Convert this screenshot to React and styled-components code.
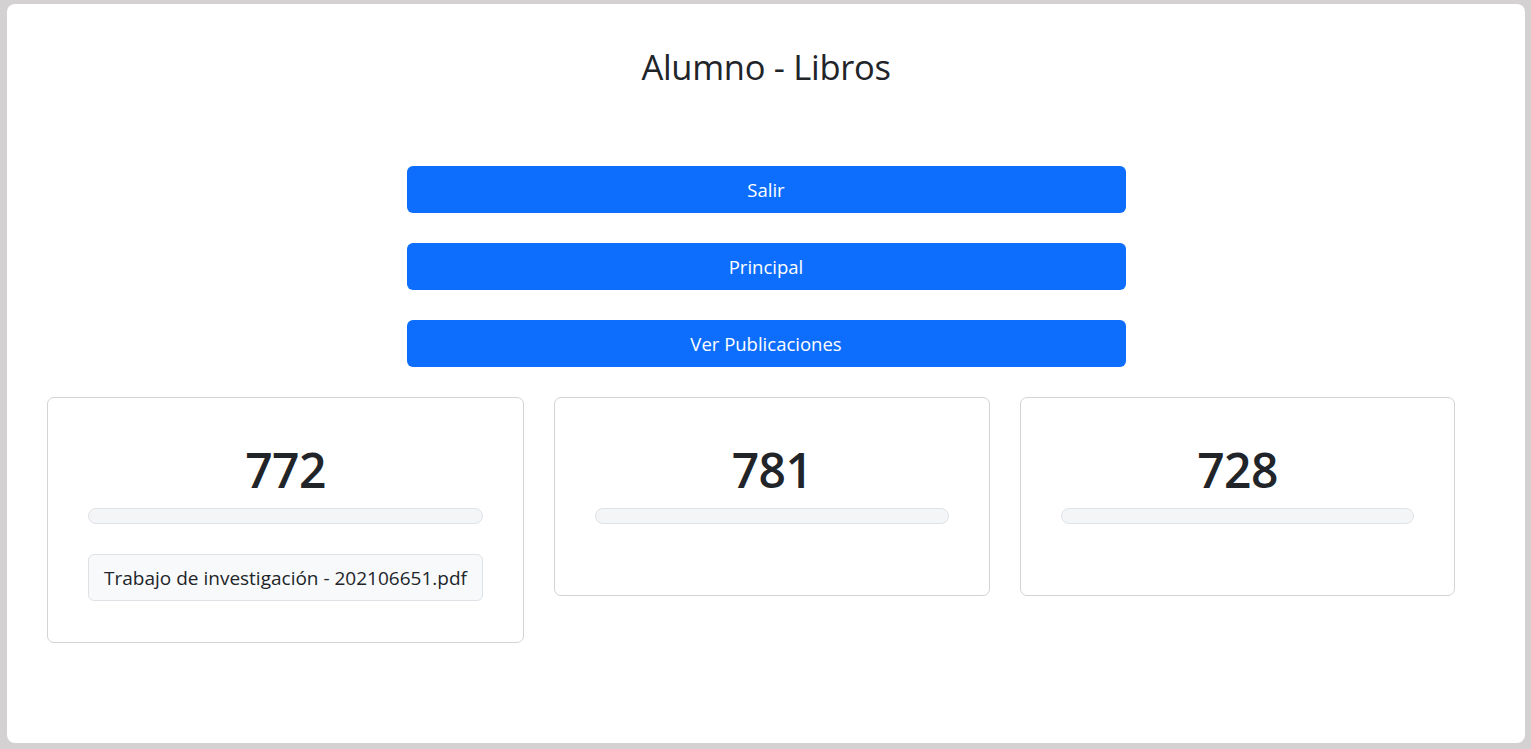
import React from 'react'
import styled, { createGlobalStyle } from 'styled-components'

const GlobalStyle = createGlobalStyle`
  html, body {
    margin: 0;
    padding: 0;
    height: 100%;
    background: #d3d1d1;
  }
  body {
    font-family: "Open Sans", "Noto Sans", "Liberation Sans", sans-serif;
    color: #212529;
  }
`;

const Frame = styled.div`
  box-sizing: border-box;
  height: 749px;
  padding: 4px 6px 6px 7px;
`;

const Page = styled.main`
  box-sizing: border-box;
  height: 100%;
  background: #ffffff;
  border-radius: 8px;
  padding-top: 36px;
  display: flex;
  flex-direction: column;
`;

const Title = styled.h2`
  margin: 0;
  text-align: center;
  font-size: 34.5px;
  font-weight: 400;
  line-height: 54px;
  letter-spacing: -0.3px;
`;

const ButtonStack = styled.div`
  margin-top: 72px;
  display: flex;
  flex-direction: column;
  align-items: center;
  gap: 30px;
`;

const NavButton = styled.button`
  width: 719px;
  height: 47px;
  border: none;
  border-radius: 6px;
  background: #0d6efd;
  color: #ffffff;
  font-family: inherit;
  font-size: 18.5px;
  cursor: pointer;
`;

const CardRow = styled.div`
  margin-top: 30px;
  padding-left: 40px;
  display: grid;
  grid-template-columns: 477px 436px 435px;
  column-gap: 30px;
  align-items: start;
`;

const Card = styled.section`
  box-sizing: border-box;
  border: 1px solid #d3d3d3;
  border-radius: 7px;
  padding: 40px 40px 41px;
  display: flex;
  flex-direction: column;
  align-items: stretch;
`;

const Count = styled.div`
  text-align: center;
  font-size: 48px;
  font-weight: 600;
  line-height: 58px;
  letter-spacing: -0.6px;
  padding-top: 3px;
  margin-bottom: 9px;
`;

const Progress = styled.div`
  box-sizing: border-box;
  height: 16px;
  border: 1px solid #dfe2e6;
  border-radius: 8px;
  background: #f4f5f7;
  margin-bottom: 30px;
`;

const FileChip = styled.div`
  box-sizing: border-box;
  height: 47px;
  display: flex;
  align-items: center;
  justify-content: center;
  border: 1px solid #dee2e6;
  border-radius: 6px;
  background: #f8f9fa;
  font-size: 19px;
  white-space: nowrap;
`;

const libros = [
  { id: 772, files: ['Trabajo de investigación - 202106651.pdf'] },
  { id: 781, files: [] },
  { id: 728, files: [] },
];

export default function App() {
  return (
    <>
      <GlobalStyle />
      <Frame>
        <Page>
          <Title>Alumno - Libros</Title>
          <ButtonStack>
            <NavButton>Salir</NavButton>
            <NavButton>Principal</NavButton>
            <NavButton>Ver Publicaciones</NavButton>
          </ButtonStack>
          <CardRow>
            {libros.map((l) => (
              <Card key={l.id}>
                <Count>{l.id}</Count>
                <Progress />
                {l.files.map((f) => (
                  <FileChip key={f}>{f}</FileChip>
                ))}
              </Card>
            ))}
          </CardRow>
        </Page>
      </Frame>
    </>
  )
}
